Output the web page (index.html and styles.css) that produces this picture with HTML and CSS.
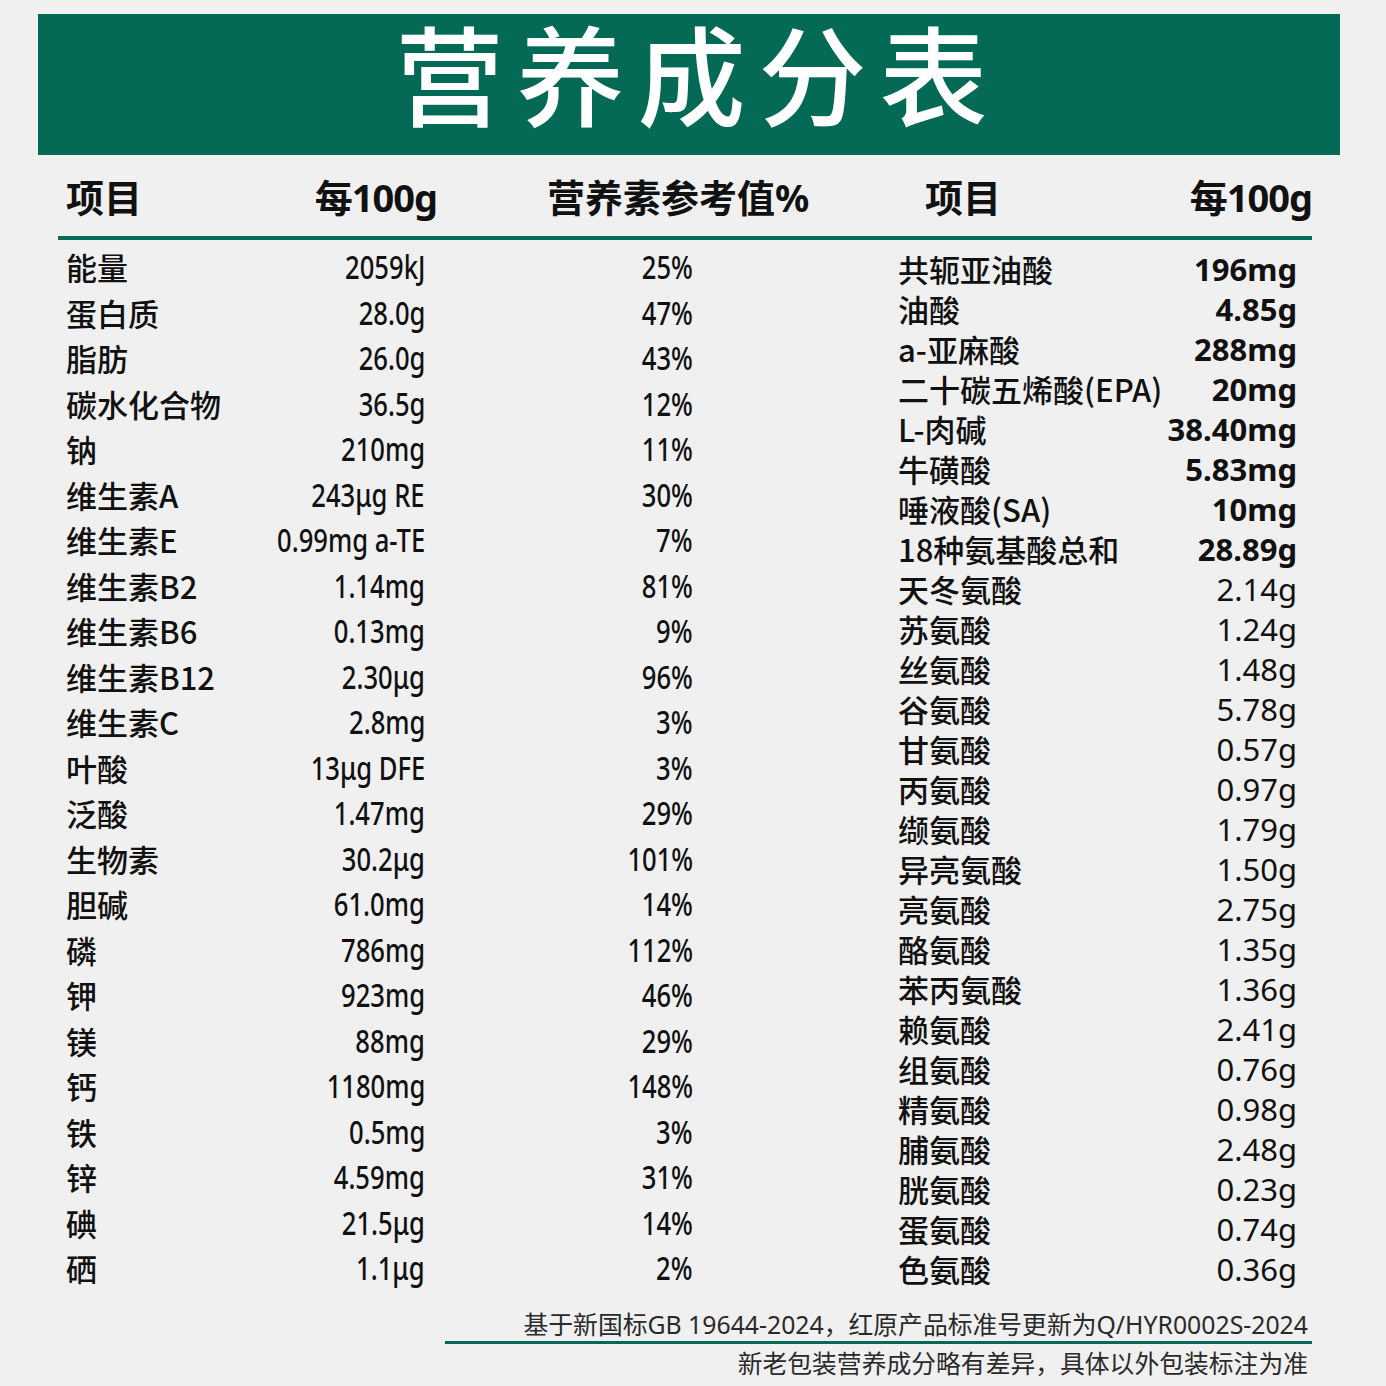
FILE: index.html
```html
<!DOCTYPE html>
<html lang="zh-CN">
<head>
<meta charset="utf-8">
<title>营养成分表</title>
<link rel="stylesheet" href="styles.css">
</head>
<body>
<div class="page">
  <header class="banner"><h1 class="title">营养成分表</h1></header>

  <div class="head-row">
    <div class="h-item">项目</div>
    <div class="h-val">每100g</div>
    <div class="h-nrv">营养素参考值%</div>
    <div class="h-right"><span>项目</span><span>每100g</span></div>
  </div>

  <div class="tables">
    <div class="ltable">
      <div class="name">能量</div><div class="val"><span>2059kJ</span></div><div class="pct"><span>25%</span></div>
      <div class="name">蛋白质</div><div class="val"><span>28.0g</span></div><div class="pct"><span>47%</span></div>
      <div class="name">脂肪</div><div class="val"><span>26.0g</span></div><div class="pct"><span>43%</span></div>
      <div class="name">碳水化合物</div><div class="val"><span>36.5g</span></div><div class="pct"><span>12%</span></div>
      <div class="name">钠</div><div class="val"><span>210mg</span></div><div class="pct"><span>11%</span></div>
      <div class="name">维生素A</div><div class="val"><span>243μg RE</span></div><div class="pct"><span>30%</span></div>
      <div class="name">维生素E</div><div class="val"><span>0.99mg a-TE</span></div><div class="pct"><span>7%</span></div>
      <div class="name">维生素B2</div><div class="val"><span>1.14mg</span></div><div class="pct"><span>81%</span></div>
      <div class="name">维生素B6</div><div class="val"><span>0.13mg</span></div><div class="pct"><span>9%</span></div>
      <div class="name">维生素B12</div><div class="val"><span>2.30μg</span></div><div class="pct"><span>96%</span></div>
      <div class="name">维生素C</div><div class="val"><span>2.8mg</span></div><div class="pct"><span>3%</span></div>
      <div class="name">叶酸</div><div class="val"><span>13μg DFE</span></div><div class="pct"><span>3%</span></div>
      <div class="name">泛酸</div><div class="val"><span>1.47mg</span></div><div class="pct"><span>29%</span></div>
      <div class="name">生物素</div><div class="val"><span>30.2μg</span></div><div class="pct"><span>101%</span></div>
      <div class="name">胆碱</div><div class="val"><span>61.0mg</span></div><div class="pct"><span>14%</span></div>
      <div class="name">磷</div><div class="val"><span>786mg</span></div><div class="pct"><span>112%</span></div>
      <div class="name">钾</div><div class="val"><span>923mg</span></div><div class="pct"><span>46%</span></div>
      <div class="name">镁</div><div class="val"><span>88mg</span></div><div class="pct"><span>29%</span></div>
      <div class="name">钙</div><div class="val"><span>1180mg</span></div><div class="pct"><span>148%</span></div>
      <div class="name">铁</div><div class="val"><span>0.5mg</span></div><div class="pct"><span>3%</span></div>
      <div class="name">锌</div><div class="val"><span>4.59mg</span></div><div class="pct"><span>31%</span></div>
      <div class="name">碘</div><div class="val"><span>21.5μg</span></div><div class="pct"><span>14%</span></div>
      <div class="name">硒</div><div class="val"><span>1.1μg</span></div><div class="pct"><span>2%</span></div>
    </div>

    <div class="rtable">
      <div class="name">共轭亚油酸</div><div class="val bold">196mg</div>
      <div class="name">油酸</div><div class="val bold">4.85g</div>
      <div class="name">a-亚麻酸</div><div class="val bold">288mg</div>
      <div class="name">二十碳五烯酸(EPA)</div><div class="val bold">20mg</div>
      <div class="name">L-肉碱</div><div class="val bold">38.40mg</div>
      <div class="name">牛磺酸</div><div class="val bold">5.83mg</div>
      <div class="name">唾液酸(SA)</div><div class="val bold">10mg</div>
      <div class="name">18种氨基酸总和</div><div class="val bold">28.89g</div>
      <div class="name">天冬氨酸</div><div class="val">2.14g</div>
      <div class="name">苏氨酸</div><div class="val">1.24g</div>
      <div class="name">丝氨酸</div><div class="val">1.48g</div>
      <div class="name">谷氨酸</div><div class="val">5.78g</div>
      <div class="name">甘氨酸</div><div class="val">0.57g</div>
      <div class="name">丙氨酸</div><div class="val">0.97g</div>
      <div class="name">缬氨酸</div><div class="val">1.79g</div>
      <div class="name">异亮氨酸</div><div class="val">1.50g</div>
      <div class="name">亮氨酸</div><div class="val">2.75g</div>
      <div class="name">酪氨酸</div><div class="val">1.35g</div>
      <div class="name">苯丙氨酸</div><div class="val">1.36g</div>
      <div class="name">赖氨酸</div><div class="val">2.41g</div>
      <div class="name">组氨酸</div><div class="val">0.76g</div>
      <div class="name">精氨酸</div><div class="val">0.98g</div>
      <div class="name">脯氨酸</div><div class="val">2.48g</div>
      <div class="name">胱氨酸</div><div class="val">0.23g</div>
      <div class="name">蛋氨酸</div><div class="val">0.74g</div>
      <div class="name">色氨酸</div><div class="val">0.36g</div>
    </div>
  </div>

  <footer class="foot">
    <p class="foot-1">基于新国标GB 19644-2024，红原产品标准号更新为Q/HYR0002S-2024</p>
    <p class="foot-2">新老包装营养成分略有差异，具体以外包装标注为准</p>
  </footer>
</div>
</body>
</html>
```

FILE: styles.css
```css
* { box-sizing: border-box; }
html, body {
  margin: 0;
  padding: 0;
  background: #f0f0f0;
}
body {
  width: 1386px;
  height: 1386px;
  overflow: hidden;
  font-family: "Noto Sans", "Noto Sans CJK SC", sans-serif;
  color: #111;
}
.page {
  padding-top: 14px;
}
.banner {
  margin: 0 46px 0 38px;
  height: 141px;
  background: #046a56;
  display: flex;
  justify-content: center;
  align-items: flex-start;
}
.title {
  margin: 0;
  padding-top: 0;
  padding-left: 18px;
  font-family: "Noto Sans CJK SC", sans-serif;
  font-weight: 500;
  font-size: 108px;
  line-height: 114px;
  letter-spacing: 13px;
  color: #fff;
}

/* header row */
.head-row {
  margin-left: 58px;
  width: 1254px;
  height: 85px;
  padding: 3px 0 0 8px;
  border-bottom: 4px solid #046a56;
  display: grid;
  grid-template-columns: 184px 187px 488px 1fr;
  align-items: center;
  font-family: "Noto Sans", "Noto Sans CJK SC", sans-serif;
  font-weight: 700;
  font-size: 38px;
  line-height: 48px;
  color: #111;
}
.h-val { text-align: right; letter-spacing: -1px; }
.h-nrv { padding-left: 110px; }
.h-right {
  display: flex;
  justify-content: space-between;
}
.h-right span:last-child { letter-spacing: -1px; }

/* tables */
.tables {
  display: flex;
  margin-left: 66px;
  gap: 205px;
}
.ltable {
  width: 627px;
  margin-top: 4px;
  display: grid;
  grid-template-columns: 189px 170px 268px;
  grid-auto-rows: 45.5px;
  align-items: center;
  line-height: 45.5px;
}
.ltable .name,
.rtable .name {
  font-family: "Noto Sans CJK SC", sans-serif;
  font-weight: 500;
  font-size: 31px;
  white-space: nowrap;
}
.ltable .val,
.ltable .pct {
  display: flex;
  justify-content: flex-end;
  font-family: "Noto Sans", sans-serif;
  font-weight: 500;
  font-size: 32px;
  white-space: nowrap;
}
.ltable .val span,
.ltable .pct span {
  display: inline-block;
  transform: scaleX(0.8);
  transform-origin: right center;
}
.rtable {
  width: 399px;
  margin-top: 9px;
  display: grid;
  grid-template-columns: 1fr auto;
  grid-auto-rows: 40px;
  align-items: center;
  line-height: 40px;
}
.rtable .val {
  text-align: right;
  font-family: "Noto Sans", sans-serif;
  font-weight: 400;
  font-size: 31px;
  white-space: nowrap;
}
.rtable .val.bold { font-weight: 700; }

/* footer */
.foot {
  margin: 16px 0 0 445px;
  width: 867px;
  text-align: right;
  font-family: "Noto Sans", "Noto Sans CJK SC", sans-serif;
  color: #2a2a2a;
}
.foot p { margin: 0; }
.foot-1 {
  font-size: 24.8px;
  line-height: 34px;
  padding-right: 4px;
  border-bottom: 3px solid #046a56;
}
.foot-2 {
  font-size: 24.8px;
  line-height: 38px;
  padding-right: 4px;
}
```
